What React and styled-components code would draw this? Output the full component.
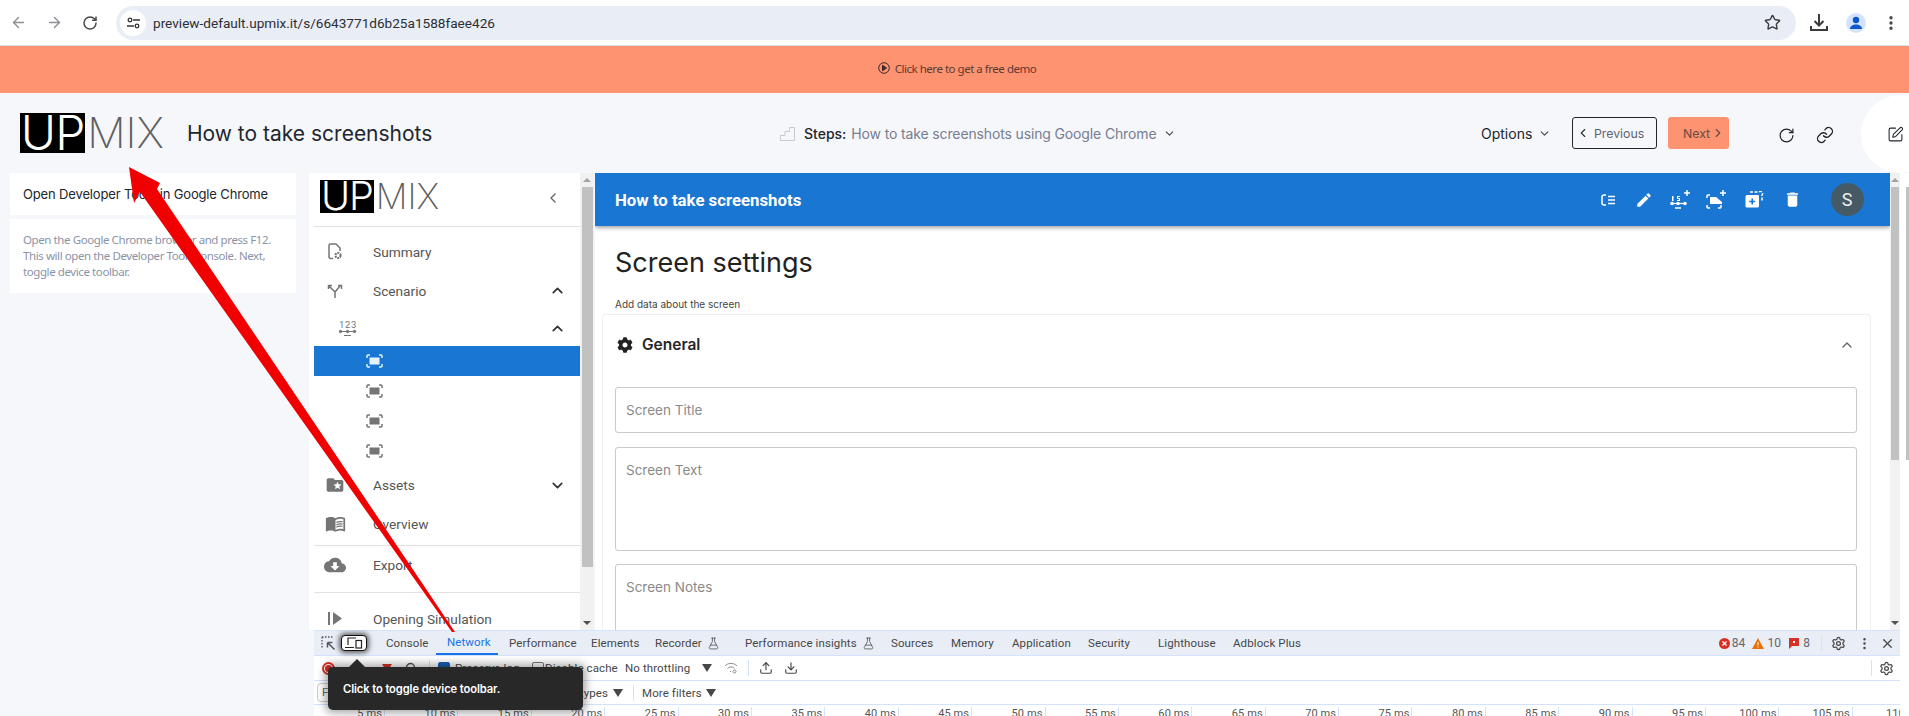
import React from "react";
import styled, { createGlobalStyle } from "styled-components";
import { ArrowLeft, ArrowRight, RotateCw, Star, MoreVertical, ChevronDown, ChevronUp, ChevronLeft, ChevronRight, Link as LinkIcon, SquarePen, Settings, X, FlaskConical, Upload, Download } from "lucide-react";
import { MdEdit, MdDelete, MdFolderSpecial, MdMenuBook, MdCloudDownload } from "react-icons/md";
import { FaCog } from "react-icons/fa";

const Global = createGlobalStyle`
  html, body { margin: 0; padding: 0; overflow: hidden; background: #f6f7fb; }
  * { box-sizing: border-box; }
`;

const Page = styled.div`
  position: relative; width: 1909px; height: 716px; overflow: hidden;
  display: flex; flex-direction: column; font-family: Roboto, sans-serif; background: #f6f7fb;
`;

/* browser chrome */
const ChromeBar = styled.div`
  flex: none; height: 46px; background: #fff; border-bottom: 1px solid #dfe1e5;
  display: flex; align-items: center; color: #474747;
`;
const NavButton = styled.div`
  width: 36px; display: flex; justify-content: center; color: ${p => p.$dim ? "#8d9094" : "#474747"};
`;
const AddressBar = styled.div`
  width: 1680px; height: 34px; margin-left: 8px; border-radius: 17px; background: #e9edf6;
  display: flex; align-items: center; padding: 0 15px 0 4px;
`;
const SiteChip = styled.div`
  width: 26px; height: 26px; border-radius: 50%; background: #fff; display: flex; align-items: center; justify-content: center;
`;
const Url = styled.div`
  margin-left: 7px; flex: 1; font: 400 13.6px Roboto, sans-serif; color: #2d2f33;
`;
const ChromeActions = styled.div`
  display: flex; align-items: center; margin-left: 14px; gap: 16px;
`;
const Profile = styled.div`
  width: 20px; height: 20px; margin-left: 2px; border-radius: 50%; background: #d3e3fd; display: flex; align-items: center; justify-content: center;
`;

/* promo */
const Promo = styled.div`
  flex: none; height: 47px; background: #fd9370; display: flex; align-items: center; justify-content: center; padding-left: 5px;
  font: 400 11.5px "Noto Sans", sans-serif; color: #5c3a30; gap: 5px; padding-bottom: 3px;
  letter-spacing: -0.48px;
`;

/* page header */
const PageHeader = styled.div`
  flex: none; height: 80px; display: flex; align-items: center; color: #22252c;
`;
const HeaderLeft = styled.div`
  width: 780px; padding-left: 20px; display: flex; align-items: center; gap: 23px;
`;
const LogoWrap = styled.div`
  display: flex; height: ${p => p.$h}px; align-items: stretch; font-family: Inter, sans-serif; font-weight: 200; overflow: hidden;
  font-size: ${p => p.$h * 1.07}px; line-height: ${p => p.$h}px; flex: none;
`;
const LogoUp = styled.div`
  width: ${p => p.$h * 1.63}px; background: #000; color: #fff; display: flex; justify-content: center; letter-spacing: -1px; font-weight: 300;
  font-size: ${p => p.$h * 1.2}px;
`;
const LogoMix = styled.div`
  color: #5f5f5f; padding-left: 2px; letter-spacing: 0;
`;
const Title = styled.div`
  font: 400 21px Inter, sans-serif; color: #22262e; letter-spacing: 0;
`;
const Steps = styled.div`
  width: 701px; display: flex; align-items: center; font: 400 14px Inter, sans-serif;
`;
const StepLabel = styled.span`
  margin-left: 9px; color: #22252c; font-weight: 500; margin-right: 5px;
`;
const StepValue = styled.span`
  color: #777d92; margin-right: 7px; letter-spacing: -0.14px;
`;
const HeaderRight = styled.div`
  flex: 1; display: flex; align-items: center;
`;
const Options = styled.div`
  width: 91px; display: flex; align-items: center; gap: 6px; font: 400 14px Inter, sans-serif; color: #22252c;
`;
const PrevButton = styled.div`
  width: 85px; height: 32px; border: 1px solid #22252c; border-radius: 3px; display: flex; align-items: center; padding-left: 3px; gap: 4px;
  font: 400 12.3px Inter, sans-serif; color: #5d6373;
`;
const NextButton = styled.div`
  width: 61px; height: 32px; margin-left: 11px; background: #fd9370; border-radius: 3px; display: flex; align-items: center; padding-left: 15px; gap: 1px;
  font: 400 12.3px Inter, sans-serif; color: #6b4a40;
`;
const HeaderIcon = styled.div`
  margin-left: ${p => p.$ml}px; display: flex; margin-top: 4px; color: #22252c;
`;
const EditBubble = styled.div`
  position: absolute; left: 1861px; top: 95px; width: 78px; height: 78px; border-radius: 50%; background: #fff;
  display: flex; align-items: center; padding-left: 26px; color: #22252c;
`;

/* workspace */
const Workspace = styled.div`
  flex: 1; min-height: 0; display: flex;
`;
const LeftColumn = styled.div`
  width: 309px; flex: none; padding-left: 10px; display: flex; flex-direction: column;
`;
const StepTitleCard = styled.div`
  width: 286px; height: 42px; background: #fff; padding-left: 13px; display: flex; align-items: center;
  font: 400 13px Inter, sans-serif; color: #22262e; letter-spacing: -0.15px;
`;
const StepTextCard = styled.div`
  width: 286px; height: 74px; margin-top: 4px; background: #fff; padding: 13px 10px 0 13px;
  font: 400 11.5px/16px "Noto Sans", sans-serif; color: #8b93a7; letter-spacing: -0.41px;
`;
const RightColumn = styled.div`
  flex: 1; min-width: 0; display: flex; flex-direction: column;
`;
const TopPanel = styled.div`
  height: 457px; flex: none; display: flex;
`;
const Sidebar = styled.div`
  width: 271px; flex: none; background: #fff; display: flex; flex-direction: column; overflow: hidden; padding-left: 5px;
`;
const SidebarHead = styled.div`
  height: 54px; flex: none; padding: 7px 0 0 6px; border-bottom: 1px solid #e2e2e2; display: flex; align-items: flex-start; justify-content: space-between; margin-bottom: 5px;
`;
const Collapse = styled.div`
  margin: 10px 19px 0 0; color: #666; display: flex;
`;
const NavRow = styled.div`
  height: ${p => p.$h || 39}px; flex: none; display: flex; align-items: center; position: relative;
  padding-left: ${p => p.$pl || 0}px; color: ${p => p.$active ? "#fff" : "#5a5a5a"};
  background: ${p => p.$active ? "#1976d2" : "transparent"};
`;
const NavIcon = styled.div`
  width: 59px; flex: none; display: flex; justify-content: center; padding-right: 17px; color: #757575;
`;
const NavLabel = styled.div`
  flex: 1; font: 400 13.7px Roboto, sans-serif; color: #555;
`;
const NavChevron = styled.div`
  width: 31px; flex: none; display: flex; color: #333;
`;
const NavDivider = styled.div`
  height: 1px; flex: none; margin-top: ${p => p.$mt || 0}px; margin-bottom: ${p => p.$mb || 0}px; background: #e2e2e2;
`;
const ScrollTrack = styled.div`
  width: ${p => p.$w}px; flex: none; background: #f1f1f1; display: flex; flex-direction: column; align-items: center; position: relative;
`;
const ScrollThumb = styled.div`
  width: ${p => p.$tw}px; height: ${p => p.$h}px; margin-top: 14px; background: #c1c1c1;
`;
const ArrowUp = styled.div`
  position: absolute; top: 5px; width: 0; height: 0; border: 4px solid transparent; border-top: 0; border-bottom: 4px solid #a3a3a3;
`;
const ArrowDown = styled.div`
  position: absolute; bottom: 5px; width: 0; height: 0; border: 4px solid transparent; border-bottom: 0; border-top: 4px solid #505050;
`;
const Main = styled.div`
  flex: 1; min-width: 0; background: #fff; display: flex; flex-direction: column; overflow: hidden; margin-left: 1px;
`;
const BlueBar = styled.div`
  height: 53px; flex: none; background: #1976d2; color: #fff; display: flex; align-items: center; padding-left: 20px;
  box-shadow: 0 2px 4px rgba(0,0,0,.35); position: relative;
`;
const BlueTitle = styled.div`
  font: 700 16.8px Roboto, sans-serif; width: 975px; flex: none;
`;
const BlueIcon = styled.div`
  width: ${p => p.$w}px; flex: none; display: flex; justify-content: center;
`;
const Avatar = styled.div`
  width: 33px; height: 33px; margin-left: 19.500px; border-radius: 50%; background: #455a64; color: #eceff1; flex: none;
  display: flex; align-items: center; justify-content: center; font: 400 18px Roboto, sans-serif;
`;
const MainBody = styled.div`
  padding: 19px 19px 0 7px; display: flex; flex-direction: column;
`;
const Heading = styled.h1`
  margin: 0 0 0 13px; font: 400 27px/36px Inter, sans-serif; color: #222; letter-spacing: 0;
`;
const SubHeading = styled.div`
  margin: 16px 0 3px 13px; font: 400 10px/14px Inter, sans-serif; color: #444; letter-spacing: 0;
`;
const FormCard = styled.div`
  border: 1px solid #efefef; border-bottom: 0; border-radius: 4px 4px 0 0; padding: 0 13px 0 12px; display: flex; flex-direction: column; gap: 13.5px;
`;
const CardHeader = styled.div`
  height: 59px; margin-bottom: -0.5px; display: flex; align-items: center; gap: 9px; padding-left: 2px; color: #222;
`;
const CardTitle = styled.div`
  flex: 1; font: 600 15.5px Inter, sans-serif; color: #262626;
`;
const CardChevron = styled.div`
  display: flex; color: #666; margin-right: 2px;
`;
const Field = styled.div`
  height: ${p => p.$h}px; flex: none; border: 1px solid #c9c9c9; border-radius: 3px; padding: ${p => p.$top ? "14px" : "0"} 10px 0;
  display: flex; align-items: ${p => p.$top ? "flex-start" : "center"};
  font: 400 13.5px Inter, sans-serif; color: #8a8a8a;
`;

/* devtools */
const Devtools = styled.div`
  height: 86px; flex: none; margin-left: 5px; background: #fff; display: flex; flex-direction: column; font: 400 11.5px Roboto, sans-serif; letter-spacing: 0.1px; color: #474747; overflow: hidden;
`;
const TabBar = styled.div`
  height: 26px; flex: none; background: #e9edf6; border-top: 1px solid #d3e3fd; border-bottom: 1px solid #d3e3fd; display: flex; align-items: center;
`;
const InspectCell = styled.div`
  width: 27px; flex: none; display: flex; justify-content: center; padding-left: 2px; color: #555;
`;
const ToggleButton = styled.div`
  width: 26px; height: 16px; flex: none; background: #fff; border-radius: 4px; border: 1.5px solid #111; box-shadow: 0 0 5px 2px rgba(0,0,0,.6);
  display: flex; align-items: center; justify-content: center; margin-right: 8px; color: #222;
`;
const Tab = styled.div`
  width: ${p => p.$w}px; height: 24px; flex: none; padding-left: 11px; display: flex; align-items: center; gap: 5px; white-space: nowrap;
  color: ${p => p.$active ? "#1a73e8" : "#474747"};
  border-bottom: ${p => p.$active ? "2px solid #1a73e8" : "0"};
`;
const TabCounters = styled.div`
  margin-left: auto; display: flex; align-items: center;
`;
const Count = styled.span`
  margin: 0 ${p => p.$mr}px 0 ${p => p.$ml}px; color: #666; font-size: 12px;
`;
const VLine = styled.div`
  width: 1px; height: 16px; background: #d3e3fd; flex: none;
`;
const ToolRow = styled.div`
  height: ${p => p.$h}px; flex: none; display: flex; align-items: center; border-bottom: 1px solid #d3e3fd; white-space: nowrap;
`;
const Cell = styled.div`
  width: ${p => p.$w}px; flex: none; display: flex; align-items: center; justify-content: ${p => p.$left ? "flex-start" : "center"};
  padding-left: ${p => p.$pl || 0}px;
`;
const RecordDot = styled.div`
  width: 13px; height: 13px; border-radius: 50%; border: 2px solid #d93025; display: flex; align-items: center; justify-content: center;
  &::after { content: ""; width: 7px; height: 7px; border-radius: 50%; background: #d93025; }
`;
const CheckBox = styled.div`
  width: 12px; height: 12px; border-radius: 2px; border: 1px solid ${p => p.$on ? "#1a5fb4" : "#777"}; background: ${p => p.$on ? "#1a5fb4" : "#fff"};
`;
const FilterInput = styled.div`
  width: 120px; height: 19px; margin-left: 3px; border: 1px solid #ccc; border-radius: 4px; padding-left: 4px; line-height: 17px; color: #666;
`;
const TypesLabel = styled.span`
  margin-left: auto;
`;
const RowEnd = styled.div`
  margin-left: auto; display: flex; align-items: center; width: 29px; height: 16px; border-left: 1px solid #d3e3fd; justify-content: center;
`;
const Timeline = styled.div`
  height: 12px; flex: none; display: flex; padding-top: 2px; font-size: 11px; line-height: 14px; color: #555;
`;
const Tick = styled.div`
  width: ${p => p.$w}px; flex: none; text-align: right; border-right: 1px solid #d3e3fd; padding-right: 2px; white-space: nowrap;
`;
const PageScroll = styled.div`
  width: 9px; flex: none; display: flex; justify-content: flex-end; background: #fff;
`;
const PageThumb = styled.div`
  width: 3px; height: 273px; margin-top: 14px; background: #c1c1c1;
`;

/* overlays */
const Tooltip = styled.div`
  position: absolute; left: 328px; top: 667px; width: 255px; height: 43px; background: #282828; border-radius: 5px; color: #fff;
  box-shadow: 0 0 8px 3px rgba(0,0,0,.35); display: flex; align-items: center; padding-left: 15px;
  font: 600 11.2px Inter, sans-serif; letter-spacing: -0.1px;
  &::before { content: ""; position: absolute; left: 21px; top: -8px; border: 8px solid transparent; border-top: 0; border-bottom: 8px solid #282828; }
`;
const ArrowOverlay = styled.svg`
  position: absolute; left: 0; top: 0; pointer-events: none;
`;

const Logo = ({ h }) => (
  <LogoWrap $h={h}>
    <LogoUp $h={h}>UP</LogoUp>
    <LogoMix>MIX</LogoMix>
  </LogoWrap>
);

const Tri = ({ c = "#474747" }) => (
  <svg width="10" height="8" viewBox="0 0 10 8"><path d="M0 0h10L5 8z" fill={c} /></svg>
);

const ScreenIcon = ({ c = "#757575" }) => (
  <svg width="17" height="14" viewBox="0 0 17 14" fill="none">
    <path d="M1 4V2a1 1 0 0 1 1-1h2M13 1h2a1 1 0 0 1 1 1v2M16 10v2a1 1 0 0 1-1 1h-2M4 13H2a1 1 0 0 1-1-1v-2" stroke={c} strokeWidth="1.5" />
    <rect x="3.5" y="3.5" width="10" height="7" fill={c} />
  </svg>
);

const FileGear = () => (
  <svg width="14" height="17" viewBox="0 0 14 17" fill="none" stroke="#757575" strokeWidth="1.5">
    <path d="M5 15.500H2.500A1.500 1.500 0 0 1 1 14V2.500A1.500 1.500 0 0 1 2.500 1H8l4 4v3" />
    <circle cx="10" cy="12.500" r="2.600" strokeWidth="2" strokeDasharray="2 .8" />
  </svg>
);
const Fork = () => (
  <svg width="16" height="14" viewBox="0 0 16 14" fill="none" stroke="#757575" strokeWidth="1.5">
    <path d="M8 14V8L2 2M8 8l5-6M1.500 5V1.500h3.500M11 1.500h3.500V5" />
  </svg>
);
const Numbered = ({ c = "#757575" }) => (
  <svg width="18" height="17" viewBox="0 0 18 17" fill="none" stroke={c}>
    <text x="0" y="8" fontSize="9.500" fontFamily="Roboto" fill={c} stroke="none" letterSpacing="0.6">123</text>
    <path d="M0 11.500h17M5 15.500h7" strokeWidth="1" />
    <circle cx="1.500" cy="11.500" r="1.200" fill={c} /><circle cx="8.500" cy="11.500" r="1.200" fill={c} /><circle cx="15.500" cy="11.500" r="1.200" fill={c} />
  </svg>
);
const OpenSim = () => (
  <svg width="15" height="15" viewBox="0 0 15 15" fill="#757575"><rect x="0" y="1" width="2" height="13" /><path d="M5 1l9 6.500-9 6.500z" /></svg>
);
const StepsGlyph = () => (
  <svg width="15" height="15" viewBox="0 0 15 15" fill="none" stroke="#c9c9cf"><path d="M.5 14.500v-5h4.500v-4h4.500v-4h5v13z" /></svg>
);
const PlayRing = () => (
  <svg width="12" height="12" viewBox="0 0 12 12" fill="none" stroke="#3a2b27"><circle cx="6" cy="6" r="5.300" /><path d="M4.500 3.300l4 2.700-4 2.700z" fill="#3a2b27" /></svg>
);
const DownloadTray = () => (
  <svg width="18" height="19" viewBox="0 0 18 19" fill="none" stroke="#3c3c3c" strokeWidth="2"><path d="M9 1v11M4.500 8l4.500 4.500L13.500 8M1 13v4h16v-4" /></svg>
);
const Person = () => (
  <svg width="14" height="14" viewBox="0 0 14 14" fill="#0b57d0"><circle cx="7" cy="4" r="3.200" /><path d="M1 13c0-3 3-4.500 6-4.500s6 1.500 6 4.500z" /></svg>
);
const Tune = () => (
  <svg width="13" height="12" viewBox="0 0 13 12" fill="none" stroke="#333" strokeWidth="1.300"><circle cx="3" cy="3" r="1.800" /><path d="M6 3h7M0 9h7" /><circle cx="10" cy="9" r="1.800" /></svg>
);
const Outdent = () => (
  <svg width="15" height="12" viewBox="0 0 15 12" fill="none" stroke="#fff" strokeWidth="1.500"><path d="M5 1H3a2 2 0 0 0-2 2v6a2 2 0 0 0 2 2h2M7 2.500h7M7 6h7M7 9.500h7" /></svg>
);
const StepsPlus = () => (
  <svg width="21" height="20" viewBox="0 0 21 20" fill="#fff">
    <path d="M17 0v6M14 3h6" stroke="#fff" strokeWidth="1.500" />
    <path d="M2 6h1.500v5H2zM7 6h3v1H8v1h2v3H7v-1h2V9H7z" />
    <path d="M1 13.500h15" stroke="#fff" strokeWidth="1.200" />
    <circle cx="2" cy="13.500" r="1.800" /><circle cx="8" cy="13.500" r="1.800" /><circle cx="15" cy="13.500" r="1.800" />
    <path d="M5 18h6" stroke="#fff" strokeWidth="1.500" />
  </svg>
);
const ScreenPlus = () => (
  <svg width="21" height="20" viewBox="0 0 21 20" fill="none" stroke="#fff" strokeWidth="1.500">
    <path d="M17 0v6M14 3h6" />
    <path d="M1 8V6a1 1 0 0 1 1-1h2M15 15v2a1 1 0 0 1-1 1h-2M4 18H2a1 1 0 0 1-1-1v-2" />
    <path d="M4 7h6l6 5v2H4z" fill="#fff" stroke="none" />
  </svg>
);
const AddAsset = () => (
  <svg width="19" height="17" viewBox="0 0 19 17" fill="none">
    <path d="M5 1h9a2 2 0 0 1 3 3v7" stroke="#fff" strokeWidth="1.500" strokeDasharray="3 1.500" />
    <path d="M2 4h11a1 1 0 0 1 1 1v10a1.500 1.500 0 0 1-1.500 1.500H2A1.500 1.500 0 0 1 .500 15V5.500A1.500 1.500 0 0 1 2 4z" fill="#fff" />
    <path d="M7.200 7.500v6M4.200 10.500h6" stroke="#1976d2" strokeWidth="1.600" />
  </svg>
);
const ToggleGlyph = () => (
  <svg width="18" height="12" viewBox="0 0 18 12" fill="none" stroke="#222" strokeWidth="1.200"><path d="M3 8V1h8M0 10.500h9" /><rect x="11" y="3.500" width="5.500" height="7.500" /></svg>
);
const InspectGlyph = () => (
  <svg width="15" height="15" viewBox="0 0 15 15" fill="none" stroke="#555"><path d="M1 1h11M1 1v11" strokeDasharray="1.500 1.500" strokeWidth="1.300" /><path d="M6.500 6.500l7 7M6.500 6.500h5M6.500 6.500v5" strokeWidth="1.500" /></svg>
);
const ErrorIcon = () => (
  <svg width="11" height="11" viewBox="0 0 11 11"><circle cx="5.500" cy="5.500" r="5.500" fill="#d93025" /><path d="M3.500 3.500l4 4M7.500 3.500l-4 4" stroke="#fff" strokeWidth="1.300" /></svg>
);
const WarnIcon = () => (
  <svg width="12" height="11" viewBox="0 0 12 11"><path d="M6 0l6 11H0z" fill="#e8710a" /><path d="M6 4v3.500M6 8.500v1" stroke="#fff" /></svg>
);
const FlagIcon = () => (
  <svg width="10" height="11" viewBox="0 0 10 11"><path d="M0 0h10v8H3l-3 3z" fill="#d93025" /><rect x="4" y="3" width="2" height="2" fill="#fff" /></svg>
);
const WifiGear = () => (
  <svg width="14" height="12" viewBox="0 0 14 12" fill="none" stroke="#8a8a8a"><path d="M1 4c3-3.500 9-3.500 12 0M3.500 6.500c2-2 5-2 7 0M6 9l1 1" /><circle cx="10.500" cy="9.500" r="1.500" /></svg>
);
const SearchGlyph = () => (
  <svg width="13" height="13" viewBox="0 0 13 13" fill="none" stroke="#555" strokeWidth="1.400"><circle cx="5.500" cy="5.500" r="4" /><path d="M8.500 8.500l4 4" /></svg>
);

const tabs = [
  ["Console", 61], ["Network", 62, true], ["Performance", 82], ["Elements", 64], ["Recorder", 90, false, true],
  ["Performance insights", 146, false, true], ["Sources", 60], ["Memory", 61], ["Application", 76], ["Security", 70], ["Lighthouse", 75], ["Adblock Plus", 80],
];
const ticks = Array.from({ length: 22 }, (_, i) => (i + 1) * 5);

export default function App() {
  return (
    <Page>
      <Global />
      <ChromeBar>
        <NavButton $dim><ArrowLeft size={17} /></NavButton>
        <NavButton $dim><ArrowRight size={17} /></NavButton>
        <NavButton><RotateCw size={16} strokeWidth={2.2} /></NavButton>
        <AddressBar>
          <SiteChip><Tune /></SiteChip>
          <Url>preview-default.upmix.it/s/6643771d6b25a1588faee426</Url>
          <Star size={17} strokeWidth={2} color="#3c3c3c" />
        </AddressBar>
        <ChromeActions>
          <DownloadTray />
          <Profile><Person /></Profile>
          <MoreVertical size={18} strokeWidth={2.5} color="#474747" />
        </ChromeActions>
      </ChromeBar>

      <Promo><PlayRing />Click here to get a free demo</Promo>

      <PageHeader>
        <HeaderLeft>
          <Logo h={40} />
          <Title>How to take screenshots</Title>
        </HeaderLeft>
        <Steps>
          <StepsGlyph />
          <StepLabel>Steps:</StepLabel>
          <StepValue>How to take screenshots using Google Chrome</StepValue>
          <ChevronDown size={13} color="#444" />
        </Steps>
        <HeaderRight>
          <Options>Options <ChevronDown size={13} color="#444" /></Options>
          <PrevButton><ChevronLeft size={14} color="#333" />Previous</PrevButton>
          <NextButton>Next <ChevronRight size={14} /></NextButton>
          <HeaderIcon $ml={49}><RotateCw size={17} strokeWidth={1.7} /></HeaderIcon>
          <HeaderIcon $ml={21}><LinkIcon size={18} strokeWidth={1.8} /></HeaderIcon>
        </HeaderRight>
      </PageHeader>
      <EditBubble><SquarePen size={17} strokeWidth={1.5} /></EditBubble>

      <Workspace>
        <LeftColumn>
          <StepTitleCard>Open Developer Tools in Google Chrome</StepTitleCard>
          <StepTextCard>Open the Google Chrome browser and press F12. This will open the Developer Tools console. Next, toggle device toolbar.</StepTextCard>
        </LeftColumn>
        <RightColumn>
          <TopPanel>
            <Sidebar>
              <SidebarHead>
                <Logo h={33} />
                <Collapse><ChevronLeft size={16} strokeWidth={2} /></Collapse>
              </SidebarHead>
              <NavRow><NavIcon><FileGear /></NavIcon><NavLabel>Summary</NavLabel></NavRow>
              <NavRow><NavIcon><Fork /></NavIcon><NavLabel>Scenario</NavLabel><NavChevron><ChevronUp size={17} strokeWidth={2.4} /></NavChevron></NavRow>
              <NavRow $h={36} $pl={25}><Numbered /><NavLabel /><NavChevron><ChevronUp size={17} strokeWidth={2.4} /></NavChevron></NavRow>
              <NavRow $h={30} $pl={52} $active><ScreenIcon c="#e3f2fd" /></NavRow>
              <NavRow $h={30} $pl={52}><ScreenIcon /></NavRow>
              <NavRow $h={30} $pl={52}><ScreenIcon /></NavRow>
              <NavRow $h={30} $pl={52}><ScreenIcon /></NavRow>
              <NavRow $h={38}><NavIcon><MdFolderSpecial size={20} /></NavIcon><NavLabel>Assets</NavLabel><NavChevron><ChevronDown size={17} strokeWidth={2.4} /></NavChevron></NavRow>
              <NavRow><NavIcon><MdMenuBook size={21} /></NavIcon><NavLabel>Overview</NavLabel></NavRow>
              <NavDivider $mt={2} />
              <NavRow $h={38}><NavIcon><MdCloudDownload size={22} /></NavIcon><NavLabel>Export</NavLabel></NavRow>
              <NavDivider $mt={8} $mb={6} />
              <NavRow><NavIcon><OpenSim /></NavIcon><NavLabel>Opening Simulation</NavLabel></NavRow>
            </Sidebar>
            <ScrollTrack $w={14}><ArrowUp /><ScrollThumb $tw={11} $h={380} /><ArrowDown /></ScrollTrack>
            <Main>
              <BlueBar>
                <BlueTitle>How to take screenshots</BlueTitle>
                <BlueIcon $w={36}><Outdent /></BlueIcon>
                <BlueIcon $w={36}><MdEdit size={18} /></BlueIcon>
                <BlueIcon $w={36}><StepsPlus /></BlueIcon>
                <BlueIcon $w={37}><ScreenPlus /></BlueIcon>
                <BlueIcon $w={38}><AddAsset /></BlueIcon>
                <BlueIcon $w={38}><MdDelete size={19} /></BlueIcon>
                <Avatar>S</Avatar>
              </BlueBar>
              <MainBody>
                <Heading>Screen settings</Heading>
                <SubHeading>Add data about the screen</SubHeading>
                <FormCard>
                  <CardHeader>
                    <FaCog size={16} />
                    <CardTitle>General</CardTitle>
                    <CardChevron><ChevronUp size={16} /></CardChevron>
                  </CardHeader>
                  <Field $h={46}>Screen Title</Field>
                  <Field $h={104} $top>Screen Text</Field>
                  <Field $h={120} $top>Screen Notes</Field>
                </FormCard>
              </MainBody>
            </Main>
            <ScrollTrack $w={10}><ArrowUp /><ScrollThumb $tw={8} $h={273} /><ArrowDown /></ScrollTrack>
          </TopPanel>
          <Devtools>
            <TabBar>
              <InspectCell><InspectGlyph /></InspectCell>
              <ToggleButton><ToggleGlyph /></ToggleButton>
              {tabs.map(([name, w, active, flask]) => (
                <Tab key={name} $w={w} $active={active}>{name}{flask && <FlaskConical size={13} strokeWidth={1.4} />}</Tab>
              ))}
              <TabCounters>
                <ErrorIcon /><Count $ml={2} $mr={7}>84</Count>
                <WarnIcon /><Count $ml={3} $mr={8}>10</Count>
                <FlagIcon /><Count $ml={4} $mr={11}>8</Count>
                <VLine />
                <Cell $w={32}><Settings size={15} /></Cell>
                <Cell $w={20}><MoreVertical size={15} /></Cell>
                <Cell $w={26}><X size={15} /></Cell>
              </TabCounters>
            </TabBar>
            <ToolRow $h={25}>
              <Cell $w={28}><RecordDot /></Cell>
              <Cell $w={30} />
              <Cell $w={30}><Tri c="#d93025" /></Cell>
              <Cell $w={18}><SearchGlyph /></Cell>
              <Cell $w={18}><VLine /></Cell>
              <Cell $w={12}><CheckBox $on /></Cell>
              <Cell $w={82} $left $pl={5}>Preserve log</Cell>
              <Cell $w={12}><CheckBox /></Cell>
              <Cell $w={75} $left $pl={1}>Disable cache</Cell>
              <Cell $w={81} $left $pl={6}>No throttling</Cell>
              <Cell $w={14}><Tri /></Cell>
              <Cell $w={34}><WifiGear /></Cell>
              <VLine />
              <Cell $w={34}><Upload size={14} /></Cell>
              <Cell $w={16}><Download size={14} /></Cell>
              <RowEnd><Settings size={15} /></RowEnd>
            </ToolRow>
            <ToolRow $h={24}>
              <Cell $w={294} $left><FilterInput>Filter</FilterInput><TypesLabel>types</TypesLabel></Cell>
              <Cell $w={20}><Tri /></Cell>
              <Cell $w={10} $left $pl={5}><VLine /></Cell>
              <Cell $w={64} $left $pl={4}>More filters</Cell>
              <Cell $w={18}><Tri /></Cell>
            </ToolRow>
            <Timeline>
              {ticks.map((t, i) => <Tick key={t} $w={i === 0 ? 71 : 73.4}>{t} ms</Tick>)}
            </Timeline>
          </Devtools>
        </RightColumn>
        <PageScroll><PageThumb /></PageScroll>
      </Workspace>

      <Tooltip>Click to toggle device toolbar.</Tooltip>
      <ArrowOverlay width="1909" height="716" viewBox="0 0 1909 716">
        <path d="M129 167L160 183L157 189L455 632L452 632L140 192L134 203Z" fill="#f00000" />
      </ArrowOverlay>
    </Page>
  );
}
